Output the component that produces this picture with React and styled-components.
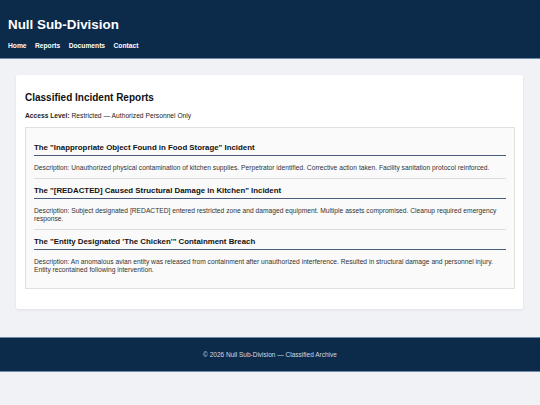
import styled, { createGlobalStyle } from "styled-components";

const Global = createGlobalStyle`
  html, body {
    margin: 0;
    padding: 0;
    background: #f0f2f5;
    font-family: "Liberation Sans", Arial, sans-serif;
    color: #222;
  }
  * { box-sizing: border-box; }
`;

const Page = styled.div`
  min-height: 405px;
  background: #f0f2f5;
`;

const Header = styled.header`
  background: #0c2a4a;
  color: #fff;
  padding: 17px 8px 8px;
  border-bottom: 1px solid #6f8aa8;
`;

const SiteTitle = styled.h1`
  margin: 0;
  font-size: 13.4px;
  line-height: 16px;
  font-weight: 700;
`;

const Nav = styled.nav`
  display: flex;
  gap: 8.4px;
  margin-top: 9px;
  a {
    color: #fff;
    text-decoration: none;
    font-size: 6.7px;
    line-height: 8px;
    font-weight: 700;
  }
`;

const Main = styled.main`
  padding: 16px 17px 28px 16px;
`;

const Card = styled.section`
  background: #fff;
  border-radius: 2px;
  box-shadow: 0 1px 3px rgba(0, 0, 0, 0.08);
  padding: 17px 8px 20px 9px;
`;

const Heading = styled.h2`
  margin: 0;
  font-size: 10px;
  line-height: 12px;
  font-weight: 700;
  color: #111;
`;

const Access = styled.p`
  margin: 7.5px 0 0;
  font-size: 6.7px;
  line-height: 8px;
  color: #222;
  b { font-weight: 700; }
`;

const ReportBox = styled.div`
  margin-top: 7px;
  background: #fafafa;
  border: 1px solid #e0e0e0;
  padding: 8px;
`;

const Item = styled.article`
  padding: 7.5px 0 6px;
  border-bottom: ${(p) => (p.$last ? "none" : "1px solid #dcdcdc")};
`;

const ItemTitle = styled.h3`
  margin: 0;
  font-size: 7.85px;
  line-height: 9px;
  font-weight: 700;
  color: #111;
  padding-bottom: 2.5px;
  border-bottom: 1px solid #4a5c7c;
`;

const Desc = styled.p`
  margin: 8px 0 0;
  font-size: 6.7px;
  line-height: 8px;
  color: #333;
`;

const Footer = styled.footer`
  background: #0c2a4a;
  border-top: 1px solid #6f8aa8;
  border-bottom: 1px solid #6f8aa8;
  height: 35px;
  display: flex;
  align-items: center;
  justify-content: center;
  color: #d3dae4;
  font-size: 6.5px;
`;

const reports = [
  {
    title: 'The "Inappropriate Object Found in Food Storage" Incident',
    desc: "Description: Unauthorized physical contamination of kitchen supplies. Perpetrator identified. Corrective action taken. Facility sanitation protocol reinforced.",
  },
  {
    title: 'The "[REDACTED] Caused Structural Damage in Kitchen" Incident',
    desc: "Description: Subject designated [REDACTED] entered restricted zone and damaged equipment. Multiple assets compromised. Cleanup required emergency response.",
  },
  {
    title: "The \"Entity Designated 'The Chicken'\" Containment Breach",
    desc: "Description: An anomalous avian entity was released from containment after unauthorized interference. Resulted in structural damage and personnel injury. Entity recontained following intervention.",
  },
];

export default function App() {
  return (
    <Page>
      <Global />
      <Header>
        <SiteTitle>Null Sub-Division</SiteTitle>
        <Nav>
          <a href="#">Home</a>
          <a href="#">Reports</a>
          <a href="#">Documents</a>
          <a href="#">Contact</a>
        </Nav>
      </Header>
      <Main>
        <Card>
          <Heading>Classified Incident Reports</Heading>
          <Access>
            <b>Access Level:</b> Restricted — Authorized Personnel Only
          </Access>
          <ReportBox>
            {reports.map((r, i) => (
              <Item key={i} $last={i === reports.length - 1}>
                <ItemTitle>{r.title}</ItemTitle>
                <Desc>{r.desc}</Desc>
              </Item>
            ))}
          </ReportBox>
        </Card>
      </Main>
      <Footer>© 2026 Null Sub-Division — Classified Archive</Footer>
    </Page>
  );
}
